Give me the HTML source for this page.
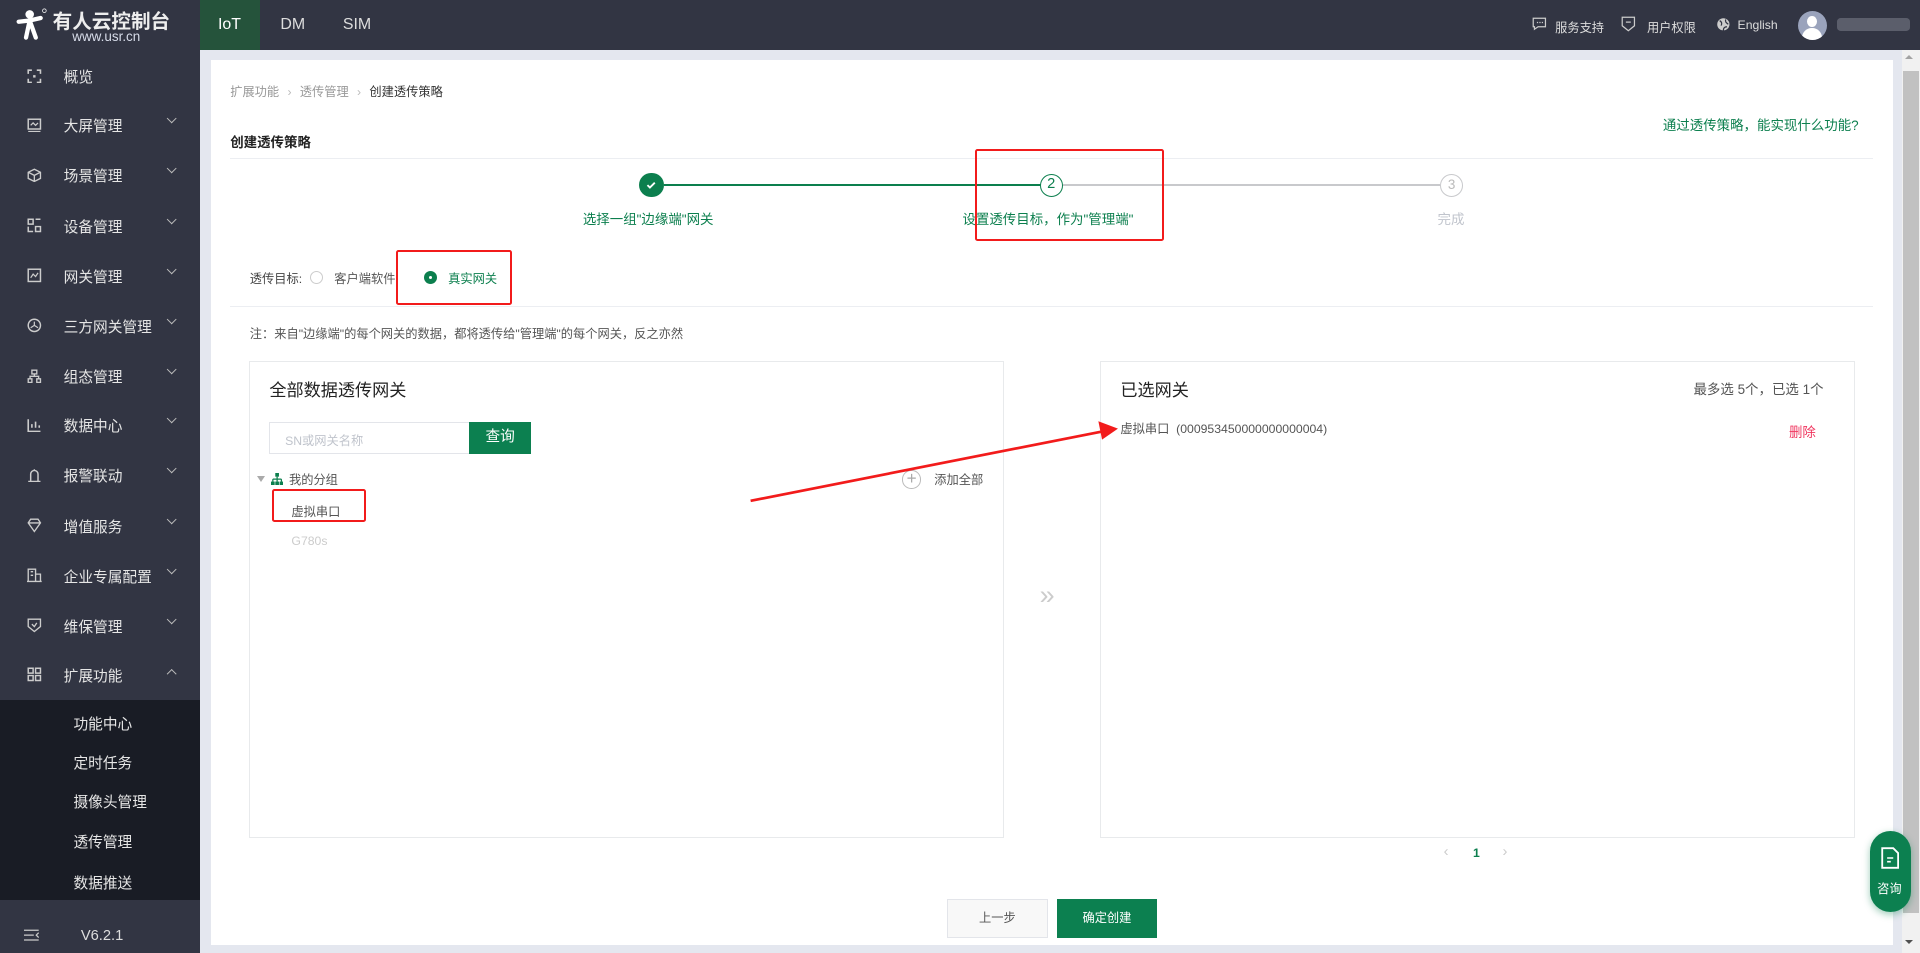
<!DOCTYPE html>
<html><head><meta charset="utf-8"><style>
html{zoom:1.22449}
*{box-sizing:border-box;margin:0;padding:0}
body{width:1568px;height:778px;overflow:hidden;background:#e4e7ef;font-family:"Liberation Sans","Noto Sans CJK SC",sans-serif;font-size:11px;color:#333;position:relative}
.a{position:absolute;white-space:nowrap}
.top{left:0;top:0;width:1568px;height:41px;background:#323543}
.side{left:0;top:41px;width:163px;height:737px;background:#323543}
.mi{position:absolute;left:0;width:163px;height:40px;color:#e6e6e6;font-size:12px}
.mi .ic{position:absolute;left:22px;top:14px;width:12px;height:12px}
.mi span{position:absolute;left:52px;top:12px}
.mi .cv{position:absolute;left:137px;top:12px;width:6px;height:6px;border-right:1px solid #bbb;border-bottom:1px solid #bbb;transform:rotate(45deg)}
.sub{left:0;top:572px;width:163px;height:163px;background:#191c25}
.sub div{position:absolute;left:60px;color:#e6e6e6;font-size:12px}
.card{left:172px;top:49px;width:1374px;height:723px;background:#fff}
.grn{color:#0c7f4e}
.panel{border:1px solid #e8eaec;background:#fff}
.red{border:2px solid #f21b1b;border-radius:2px}
</style></head><body>
<div class="a top"></div>
<div class="a" style="left:163px;top:0;width:49px;height:41px;background:#25533b"></div>
<div class="a" style="left:178px;top:13px;color:#fff;font-size:13px">IoT</div>
<div class="a" style="left:229px;top:13px;color:#ddd;font-size:13px">DM</div>
<div class="a" style="left:280px;top:13px;color:#ddd;font-size:13px">SIM</div>
<svg class="a" style="left:12px;top:6px" width="26" height="28" viewBox="0 0 26 28"><circle cx="12" cy="6" r="3.5" fill="#fff"/><path d="M3 12 L12 11 L21 9 M12 11 L9 25 M12 11 L17 25" stroke="#fff" stroke-width="3.5" fill="none" stroke-linecap="round"/><circle cx="24" cy="3" r="1.5" fill="none" stroke="#fff" stroke-width=".6"/></svg>
<div class="a" style="left:43px;top:4px;color:#eee;font-size:16px;font-weight:bold">有人云控制台</div>
<div class="a" style="left:59px;top:24px;color:#d6dbe8;font-size:11px">www.usr.cn</div>
<svg class="a" style="left:1251px;top:14px" width="12" height="12" viewBox="0 0 12 12"><path d="M1 1h10v7H5l-3 2V8H1z" fill="none" stroke="#ccc"/><path d="M4 4.5h1M6 4.5h1M8 4.5h1" stroke="#ccc"/></svg>
<div class="a" style="left:1270px;top:15px;color:#ddd;font-size:10px">服务支持</div>
<svg class="a" style="left:1324px;top:13px" width="12" height="13" viewBox="0 0 12 13"><path d="M1 1h10v7l-5 4-5-4z" fill="none" stroke="#ccc"/><path d="M4 5h4" stroke="#ccc"/></svg>
<div class="a" style="left:1345px;top:15px;color:#ddd;font-size:10px">用户权限</div>
<svg class="a" style="left:1401px;top:14px" width="12" height="12" viewBox="0 0 12 12"><circle cx="6" cy="6" r="5" fill="#ccc"/><path d="M3 3c2 1 2 3 1 4M8 2c-1 2 1 3 2 4M6 11c0-2 1-3 3-3" stroke="#323543" fill="none"/></svg>
<div class="a" style="left:1419px;top:15px;color:#ddd;font-size:10px">English</div>
<div class="a" style="left:1468px;top:9px;width:24px;height:24px;border-radius:50%;background:#9aa3bc;overflow:hidden"><div style="position:absolute;left:8px;top:4px;width:8px;height:9px;border-radius:50%;background:#fff"></div><div style="position:absolute;left:4px;top:14px;width:16px;height:12px;border-radius:8px 8px 0 0;background:#fff"></div></div>
<div class="a" style="left:1500px;top:15px;width:60px;height:10px;background:#5b5e6b;border-radius:3px"></div>
<div class="a side"></div>
<div class="mi" style="top:42px"><svg class="ic" viewBox="0 0 12 12"><path d="M1 4V1h3M8 1h3v3M11 8v3H8M4 11H1V8" stroke="#ccc" fill="none" stroke-width="1.3"/><rect x="5" y="5" width="2" height="2" fill="#ccc"/></svg><span>概览</span></div>
<div class="mi" style="top:82px"><svg class="ic" viewBox="0 0 12 12"><rect x="1" y="1" width="10" height="8" stroke="#ccc" fill="none" stroke-width="1.2"/><path d="M1 11h10M3 6l2-2 2 2 2-2" stroke="#ccc" fill="none"/></svg><span>大屏管理</span><i class="cv"></i></div>
<div class="mi" style="top:123px"><svg class="ic" viewBox="0 0 12 12"><path d="M6 1l5 2.5v5L6 11 1 8.5v-5z M1 3.5 6 6l5-2.5M6 6v5" stroke="#ccc" fill="none" stroke-width="1.1"/></svg><span>场景管理</span><i class="cv"></i></div>
<div class="mi" style="top:164px"><svg class="ic" viewBox="0 0 12 12"><path d="M1 1h4v4H1zM7 7h4v4H7zM7 1h4M1 7v4h4" stroke="#ccc" fill="none" stroke-width="1.2"/></svg><span>设备管理</span><i class="cv"></i></div>
<div class="mi" style="top:205px"><svg class="ic" viewBox="0 0 12 12"><rect x="1" y="1" width="10" height="10" stroke="#ccc" fill="none" stroke-width="1.2"/><path d="M3 8l2-3 2 2 2-3" stroke="#ccc" fill="none"/></svg><span>网关管理</span><i class="cv"></i></div>
<div class="mi" style="top:246px"><svg class="ic" viewBox="0 0 12 12"><circle cx="6" cy="6" r="5" stroke="#ccc" fill="none" stroke-width="1.2"/><path d="M6 3v3l-3 2M6 6l3 2" stroke="#ccc" fill="none"/></svg><span>三方网关管理</span><i class="cv"></i></div>
<div class="mi" style="top:287px"><svg class="ic" viewBox="0 0 12 12"><path d="M4 1h4v3H4zM1 8h3v3H1zM8 8h3v3H8zM6 4v2M2.5 8V6h7v2" stroke="#ccc" fill="none" stroke-width="1.1"/></svg><span>组态管理</span><i class="cv"></i></div>
<div class="mi" style="top:327px"><svg class="ic" viewBox="0 0 12 12"><path d="M1 1v10h10M4 8V5M7 8V3M10 8V6" stroke="#ccc" fill="none" stroke-width="1.3"/></svg><span>数据中心</span><i class="cv"></i></div>
<div class="mi" style="top:368px"><svg class="ic" viewBox="0 0 12 12"><path d="M1 11h10M3 11V5a3 3 0 0 1 6 0v6M6 1v1" stroke="#ccc" fill="none" stroke-width="1.2"/></svg><span>报警联动</span><i class="cv"></i></div>
<div class="mi" style="top:409px"><svg class="ic" viewBox="0 0 12 12"><path d="M1 4l2-3h6l2 3-5 7z M1 4h10" stroke="#ccc" fill="none" stroke-width="1.1"/></svg><span>增值服务</span><i class="cv"></i></div>
<div class="mi" style="top:450px"><svg class="ic" viewBox="0 0 12 12"><path d="M1 11V1h6v10M7 5h4v6M0 11h12M3 3h2M3 6h2" stroke="#ccc" fill="none" stroke-width="1.1"/></svg><span>企业专属配置</span><i class="cv"></i></div>
<div class="mi" style="top:491px"><svg class="ic" viewBox="0 0 12 12"><path d="M1 1h10v6l-5 4-5-4z M4 5l2 2 2-3" stroke="#ccc" fill="none" stroke-width="1.1"/></svg><span>维保管理</span><i class="cv"></i></div>
<div class="mi" style="top:531px"><svg class="ic" viewBox="0 0 12 12"><path d="M1 1h4v4H1zM7 1h4v4H7zM1 7h4v4H1zM7 7h4v4H7z" stroke="#ccc" fill="none" stroke-width="1.2"/></svg><span>扩展功能</span><i class="cv" style="transform:rotate(225deg);top:16px"></i></div>
<div class="a sub"><div style="top:10px">功能中心</div><div style="top:42px">定时任务</div><div style="top:74px">摄像头管理</div><div style="top:107px">透传管理</div><div style="top:140px">数据推送</div></div>
<svg class="a" style="left:20px;top:759px" width="12" height="10" viewBox="0 0 12 10"><path d="M0 1h12M0 5h8M0 9h12M12 3l-2 2 2 2" stroke="#ccc" fill="none"/></svg>
<div class="a" style="left:66px;top:758px;color:#ddd;font-size:12px">V6.2.1</div>
<div class="a" style="left:1553px;top:41px;width:15px;height:737px;background:#f1f1f1"></div>
<div class="a" style="left:1554px;top:58px;width:13px;height:688px;background:#c1c1c1"></div>
<div class="a" style="left:1556px;top:45px;border:4px solid transparent;border-bottom:4px solid #a3a3a3;border-top:0;width:0;height:0"></div>
<div class="a" style="left:1556px;top:768px;border:4px solid transparent;border-top:4px solid #505050;border-bottom:0;width:0;height:0"></div>
<div class="a card"></div>
<div class="a" style="left:188px;top:67px;color:#999;font-size:10px">扩展功能 <span style="margin:0 4px;color:#bbb">›</span> 透传管理 <span style="margin:0 4px;color:#bbb">›</span> <span style="color:#333">创建透传策略</span></div>
<div class="a" style="left:188px;top:107px;font-size:11px;font-weight:bold;color:#222">创建透传策略</div>
<div class="a grn" style="left:1358px;top:93px;font-size:11px">通过透传策略，能实现什么功能?</div>
<div class="a" style="left:188px;top:129px;width:1342px;height:1px;background:#eceef2"></div>
<div class="a" style="left:542px;top:150px;width:308px;height:2px;background:#0c7f4e"></div>
<div class="a" style="left:868px;top:150px;width:308px;height:2px;background:#c8c9cc"></div>
<div class="a" style="left:522px;top:141px;width:20px;height:20px;border-radius:50%;background:#0c7f4e"></div>
<svg class="a" style="left:527px;top:146px" width="10" height="10" viewBox="0 0 10 10"><path d="M2 5l2 2 4-4" stroke="#fff" stroke-width="1.5" fill="none"/></svg>
<div class="a grn" style="left:849px;top:142px;width:19px;height:19px;border-radius:50%;border:1.5px solid #0c7f4e;text-align:center;line-height:16px;font-size:12px;background:#fff">2</div>
<div class="a" style="left:1176px;top:142px;width:19px;height:19px;border-radius:50%;border:1.5px solid #c8c9cc;text-align:center;line-height:16px;font-size:11px;color:#bbb;background:#fff">3</div>
<div class="a grn" style="left:476px;top:170px;font-size:11px">选择一组"边缘端"网关</div>
<div class="a grn" style="left:786px;top:170px;font-size:11px">设置透传目标，作为"管理端"</div>
<div class="a" style="left:1174px;top:170px;font-size:11px;color:#c0c4cc">完成</div>
<div class="a red" style="left:796px;top:122px;width:155px;height:75px"></div>
<div class="a" style="left:204px;top:220px;font-size:10px;color:#444">透传目标:</div>
<div class="a" style="left:253px;top:221px;width:11px;height:11px;border-radius:50%;border:1px solid #ccc"></div>
<div class="a" style="left:273px;top:220px;font-size:10px;color:#555">客户端软件</div>
<div class="a" style="left:346px;top:221px;width:11px;height:11px;border-radius:50%;background:#0c7f4e"></div>
<div class="a" style="left:350px;top:225px;width:3px;height:3px;border-radius:50%;background:#fff"></div>
<div class="a grn" style="left:366px;top:220px;font-size:10px">真实网关</div>
<div class="a red" style="left:323px;top:204px;width:95px;height:45px"></div>
<div class="a" style="left:188px;top:250px;width:1342px;height:1px;background:#eceef2"></div>
<div class="a" style="left:204px;top:265px;font-size:10px;color:#555">注：来自"边缘端"的每个网关的数据，都将透传给"管理端"的每个网关，反之亦然</div>
<div class="a panel" style="left:203px;top:295px;width:617px;height:389px"></div>
<div class="a" style="left:220px;top:307px;font-size:14px;color:#222">全部数据透传网关</div>
<div class="a" style="left:220px;top:345px;width:164px;height:26px;border:1px solid #e3e5ea;padding:6px 0 0 12px;color:#c0c4cc;font-size:10px">SN或网关名称</div>
<div class="a" style="left:383px;top:345px;width:51px;height:26px;background:#0c8050;color:#fff;font-size:12px;text-align:center;line-height:26px">查询</div>
<div class="a" style="left:210px;top:389px;border:3.5px solid transparent;border-top:5px solid #aaa;width:0;height:0"></div>
<svg class="a" style="left:221px;top:386px" width="10" height="10" viewBox="0 0 10 10"><rect x="3.5" y="0" width="3" height="3" fill="#0c7f4e"/><path d="M5 3v2M1.5 5h7M1.5 5v2M5 5v2M8.5 5v2" stroke="#0c7f4e"/><rect x="0" y="7" width="3" height="3" fill="#0c7f4e"/><rect x="3.5" y="7" width="3" height="3" fill="#0c7f4e"/><rect x="7" y="7" width="3" height="3" fill="#0c7f4e"/></svg>
<div class="a" style="left:236px;top:384px;font-size:10px;color:#555">我的分组</div>
<div class="a" style="left:737px;top:384px;width:15px;height:15px;border-radius:50%;border:1px solid #bbb;text-align:center;line-height:12px;color:#aaa;font-size:14px">+</div>
<div class="a" style="left:763px;top:384px;font-size:10px;color:#555">添加全部</div>
<div class="a" style="left:238px;top:410px;font-size:10px;color:#555">虚拟串口</div>
<div class="a red" style="left:222px;top:399px;width:77px;height:27px"></div>
<div class="a" style="left:238px;top:436px;font-size:10px;color:#ccc">G780s</div>
<div class="a" style="left:849px;top:474px;font-size:22px;color:#ccc">»</div>
<div class="a panel" style="left:898px;top:295px;width:617px;height:389px"></div>
<div class="a" style="left:915px;top:307px;font-size:14px;color:#222">已选网关</div>
<div class="a" style="left:1383px;top:309px;font-size:11px;color:#555">最多选 5个，已选 1个</div>
<div class="a" style="left:915px;top:342px;font-size:10px;color:#555">虚拟串口 &nbsp;(000953450000000000004)</div>
<div class="a" style="left:1461px;top:344px;font-size:11px;color:#f0365f">删除</div>
<div class="a" style="left:1179px;top:689px;font-size:12px;color:#ccc">‹</div>
<div class="a grn" style="left:1203px;top:691px;font-size:10px;font-weight:bold">1</div>
<div class="a" style="left:1227px;top:689px;font-size:12px;color:#ccc">›</div>
<svg class="a" style="left:0;top:0" width="1568" height="778"><path d="M613 409 L902 352" stroke="#f21b1b" stroke-width="2.2"/><path d="M913 350 L897 344 L900 359 Z" fill="#f21b1b"/></svg>
<div class="a" style="left:773px;top:734px;width:83px;height:32px;border:1px solid #e3e5ea;background:#f8f8f8;color:#555;text-align:center;line-height:30px;font-size:10px">上一步</div>
<div class="a" style="left:863px;top:734px;width:82px;height:32px;background:#0c8050;color:#fff;text-align:center;line-height:32px;font-size:10px">确定创建</div>
<div class="a" style="left:1527px;top:679px;width:34px;height:66px;border-radius:17px;background:#0c8050;box-shadow:0 2px 6px rgba(12,128,80,.4)"></div>
<svg class="a" style="left:1536px;top:692px" width="15" height="18" viewBox="0 0 15 18"><path d="M1 1h9l4 4v12H1z" stroke="#fff" stroke-width="1.5" fill="none"/><path d="M5 9h5M5 12h3" stroke="#fff" stroke-width="1.3"/></svg>
<div class="a" style="left:1533px;top:718px;color:#fff;font-size:10px">咨询</div>
</body></html>
